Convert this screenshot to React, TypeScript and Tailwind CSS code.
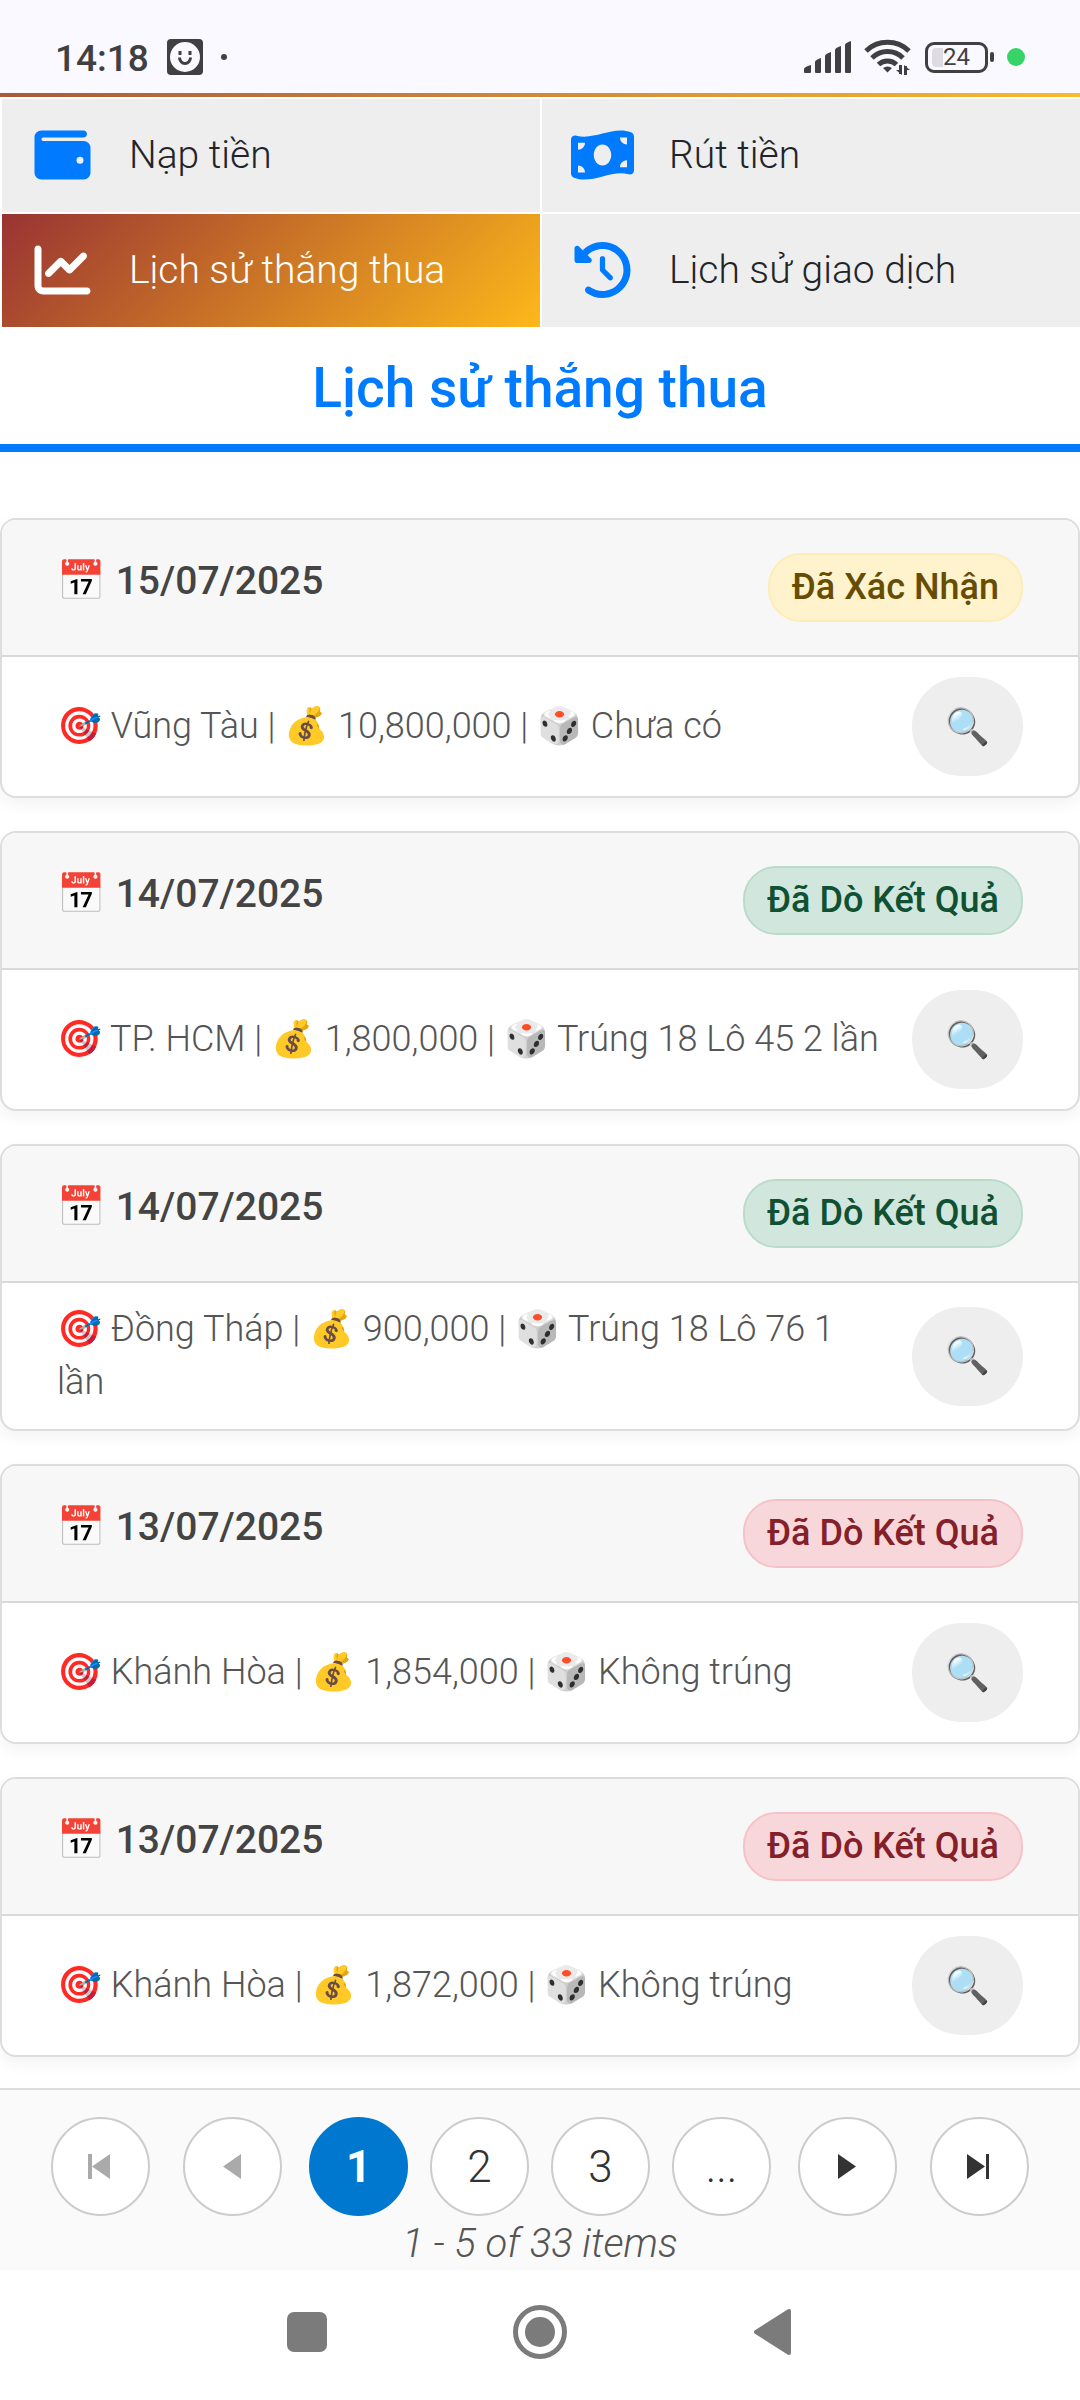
import React from 'react';
import { FaWallet, FaMoneyBillWave, FaChartLine, FaClockRotateLeft } from 'react-icons/fa6';

type Status = 'confirmed' | 'won' | 'lost';

interface Ticket {
  id: number;
  date: string;
  status: Status;
  label: string;
  province: string;
  amount: string;
  result: string;
}

const tickets: Ticket[] = [
  { id: 1, date: '15/07/2025', status: 'confirmed', label: 'Đã Xác Nhận', province: 'Vũng Tàu', amount: '10,800,000', result: 'Chưa có' },
  { id: 2, date: '14/07/2025', status: 'won', label: 'Đã Dò Kết Quả', province: 'TP. HCM', amount: '1,800,000', result: 'Trúng 18 Lô 45 2 lần' },
  { id: 3, date: '14/07/2025', status: 'won', label: 'Đã Dò Kết Quả', province: 'Đồng Tháp', amount: '900,000', result: 'Trúng 18 Lô 76 1 lần' },
  { id: 4, date: '13/07/2025', status: 'lost', label: 'Đã Dò Kết Quả', province: 'Khánh Hòa', amount: '1,854,000', result: 'Không trúng' },
  { id: 5, date: '13/07/2025', status: 'lost', label: 'Đã Dò Kết Quả', province: 'Khánh Hòa', amount: '1,872,000', result: 'Không trúng' },
];

const badgeStyles: Record<Status, string> = {
  confirmed: 'bg-[#fff3cd] border-[#ffecb5] text-[#664d03]',
  won: 'bg-[#d1e7dd] border-[#badbcc] text-[#0f5132]',
  lost: 'bg-[#f8d7da] border-[#f5c2c7] text-[#842029]',
};

const menu = [
  { label: 'Nạp tiền', icon: FaWallet, active: false },
  { label: 'Rút tiền', icon: FaMoneyBillWave, active: false },
  { label: 'Lịch sử thắng thua', icon: FaChartLine, active: true },
  { label: 'Lịch sử giao dịch', icon: FaClockRotateLeft, active: false },
];

const StatusBar: React.FC = () => (
  <div className="flex h-[93px] items-center justify-between bg-[#f9f9ff] pt-[21px] pr-[55px] pl-[55px] text-[#404042]">
    <div className="flex items-center">
      <span className="pt-1 text-[37px] leading-[44px] font-medium">14:18</span>
      <svg className="ml-[18px] h-[36px] w-[36px]" viewBox="0 0 36 36" aria-hidden="true">
        <rect width="36" height="36" rx="4" fill="#404042" />
        <circle cx="18" cy="18" r="15" fill="#f9f9ff" />
        <path d="M13 12v4M23 12v4" stroke="#404042" strokeWidth="3" />
        <path d="M12.500 18.500a5.500 6 0 0 0 11 0" fill="none" stroke="#404042" strokeWidth="3" />
      </svg>
      <span className="ml-[18px] h-[6px] w-[6px] rounded-full bg-[#404042]" />
    </div>
    <div className="flex items-center">
      <svg className="h-[34px] w-[48px]" viewBox="0 0 48 34" fill="#404042" aria-hidden="true">
        <path d="M0 32v-3q0-2 7-4v7q0 1-1 1H1q-1 0-1-1zM11 32V22q0-2 6-4v14q0 1-1 1h-4q-1 0-1-1zM21 32V16q0-2 6-4v20q0 1-1 1h-4q-1 0-1-1zM31 32V10q0-2 6-4v26q0 1-1 1h-4q-1 0-1-1zM41 32V5q0-2 6-4v31q0 1-1 1h-4q-1 0-1-1z" />
      </svg>
      <svg className="ml-[12px] h-[36px] w-[47px]" viewBox="0 0 47 36" fill="none" stroke="#404042" strokeWidth="5" aria-hidden="true">
        <path d="M2 12a31 31 0 0 1 43 0M8 19a22 22 0 0 1 31 0M14.500 25.500a13 13 0 0 1 18 0" />
        <path d="M19 29q4.500-3 9 0l-4.500 4.500z" fill="#404042" stroke="none" />
        <path d="M36.500 26v9M41.500 36v-9" strokeWidth="3" />
        <path d="M32 31h6v5zM46 31h-6v-5z" fill="#404042" stroke="none" />
      </svg>
      <div className="ml-[14px] flex items-center">
        <div className="relative flex h-[31px] w-[63px] items-center justify-center rounded-[9px] border-[3px] border-[#404042]">
          <span className="absolute top-[3px] left-[4px] h-[19px] w-[11px] rounded-l-[4px] bg-[#dedbe3]" />
          <span className="relative text-[24px] leading-[25px]">24</span>
        </div>
        <span className="ml-[2px] h-[10px] w-[4px] rounded-[2px] bg-[#404042]" />
      </div>
      <span className="ml-[13px] h-[18px] w-[18px] rounded-full bg-[#37d367]" />
    </div>
  </div>
);

const TicketCard: React.FC<{ ticket: Ticket }> = ({ ticket }) => (
  <article className="overflow-hidden rounded-[16px] border-2 border-[#dddddd] bg-white shadow-[0_6px_16px_rgba(0,0,0,0.05)]">
    <header className="flex items-start justify-between border-b-2 border-[#d9d9d9] bg-[#f7f7f7] px-[55px] py-[33px]">
      <h2 className="text-[39px] leading-[56px] font-medium text-[#444444]">{`📅 ${ticket.date}`}</h2>
      <span className={`rounded-[33px] border-2 px-[22px] py-[6px] text-[36px] leading-[53px] font-medium ${badgeStyles[ticket.status]}`}>
        {ticket.label}
      </span>
    </header>
    <div className="flex items-center justify-between gap-[28px] px-[55px] py-5">
      <p className="text-[36px] leading-[53px] font-light text-[#555555]">
        {`🎯 ${ticket.province} | 💰 ${ticket.amount} | 🎲 ${ticket.result}`}
      </p>
      <button type="button" aria-label="Xem chi tiết" className="h-[99px] w-[111px] shrink-0 rounded-full bg-[#eeeeee] text-[36px]">
        🔍
      </button>
    </div>
  </article>
);

const pageButton = 'flex h-[99px] w-[99px] items-center justify-center rounded-full border-2';

const Pager: React.FC = () => (
  <nav aria-label="Phân trang" className="border-t-2 border-[#dddddd] bg-[#fafafa] pt-[27px] pb-[3px]">
    <div className="flex justify-center gap-[27px] text-[44px] leading-[52px] font-light text-[#333333]">
      <div className="flex gap-[33px] text-[#aaaaaa]">
        <button type="button" disabled aria-label="Trang đầu" className={`${pageButton} border-[#cccccc] bg-white`}>
          <svg className="h-[26px] w-[26px]" viewBox="0 0 26 26" fill="currentColor"><path d="M0 0h4v25H0zM22 0v25L4 12.500z" /></svg>
        </button>
        <button type="button" disabled aria-label="Trang trước" className={`${pageButton} border-[#cccccc] bg-white`}>
          <svg className="h-[26px] w-[26px]" viewBox="0 0 26 26" fill="currentColor"><path d="M21 0v25L3 12.500z" /></svg>
        </button>
      </div>
      <div className="flex gap-[22px]">
        <button type="button" aria-current="page" className={`${pageButton} border-[#0078cf] bg-[#0078cf] font-bold text-white`}>1</button>
        <button type="button" className={`${pageButton} border-[#cccccc] bg-white`}>2</button>
        <button type="button" className={`${pageButton} border-[#cccccc] bg-white`}>3</button>
        <button type="button" className={`${pageButton} border-[#cccccc] bg-white`}>...</button>
      </div>
      <div className="flex gap-[33px]">
        <button type="button" aria-label="Trang sau" className={`${pageButton} border-[#cccccc] bg-white`}>
          <svg className="h-[26px] w-[26px]" viewBox="0 0 26 26" fill="currentColor"><path d="M3 0v25L21 12.500z" /></svg>
        </button>
        <button type="button" aria-label="Trang cuối" className={`${pageButton} border-[#cccccc] bg-white`}>
          <svg className="h-[26px] w-[26px]" viewBox="0 0 26 26" fill="currentColor"><path d="M19 0h3v25h-3zM0 0v25L18 12.500z" /></svg>
        </button>
      </div>
    </div>
    <p className="mt-[5px] text-center text-[40px] leading-[46px] font-light text-[#555555] italic">1 - 5 of 33 items</p>
  </nav>
);

const SystemNav: React.FC = () => (
  <div className="flex h-[130px] items-center justify-center gap-[186px] pb-[6px] text-[#7b7b7b]">
    <button type="button" aria-label="Recents">
      <svg className="h-[40px] w-[40px]" viewBox="0 0 40 40" fill="currentColor"><rect width="40" height="40" rx="7" /></svg>
    </button>
    <button type="button" aria-label="Home">
      <svg className="h-[54px] w-[54px]" viewBox="0 0 54 54"><circle cx="27" cy="27" r="24.500" fill="none" stroke="currentColor" strokeWidth="5" /><circle cx="27" cy="27" r="15" fill="currentColor" /></svg>
    </button>
    <button type="button" aria-label="Back">
      <svg className="h-[46px] w-[40px]" viewBox="0 0 40 46" fill="currentColor" stroke="currentColor" strokeWidth="4" strokeLinejoin="round"><path d="M36 2v42L3 23z" /></svg>
    </button>
  </div>
);

const App: React.FC = () => {
  return (
    <div className="min-h-screen bg-white font-[Roboto,'Noto_Sans',sans-serif]">
      <StatusBar />
      <div className="h-[4px] bg-linear-to-r from-[#ac5939] to-[#fbb92b]" />

      {/* Menu */}
      <nav className="grid grid-cols-2 gap-[2px] pt-[2px] pl-[2px]">
        {menu.map(({ label, icon: Icon, active }) => (
          <a
            key={label}
            href="#"
            className={`flex h-[113px] items-center gap-[35px] px-[29px] pb-[2px] text-[39px] leading-[58px] font-light ${
              active ? 'bg-linear-[135deg,#993333,#fdb81a] text-white' : 'bg-[#eeeeee] text-[#212529]'
            }`}
          >
            <Icon className={`h-[56px] w-[63px] shrink-0 ${active ? 'text-white' : 'text-[#007bff]'}`} />
            {label}
          </a>
        ))}
      </nav>

      <h1 className="border-b-8 border-[#007bff] pt-[28px] pb-[23px] text-center text-[55px] leading-[66px] font-medium text-[#007bff]">
        Lịch sử thắng thua
      </h1>

      {/* Danh sách vé */}
      <main className="flex flex-col gap-[33px] pt-[66px] pb-[31px]">
        {tickets.map((ticket) => (
          <TicketCard key={ticket.id} ticket={ticket} />
        ))}
      </main>

      <Pager />
      <SystemNav />
    </div>
  );
};

export default App;
